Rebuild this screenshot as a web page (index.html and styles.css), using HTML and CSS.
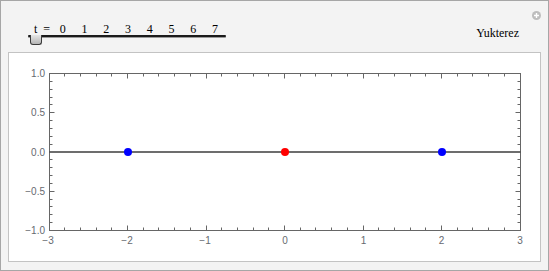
FILE: index.html
```html
<!DOCTYPE html>
<html>
<head>
<meta charset="utf-8">
<link rel="stylesheet" href="styles.css">
</head>
<body>
<div class="frame">
  <div class="controls">
    <div class="slider">
      <div class="labels">
        <span class="var">t&nbsp;&nbsp;=</span><span class="n">0</span><span class="n">1</span><span class="n">2</span><span class="n">3</span><span class="n">4</span><span class="n">5</span><span class="n">6</span><span class="n">7</span>
      </div>
      <div class="track"><div class="thumb"></div></div>
    </div>
    <div class="name">Yukterez</div>
  </div>
  <svg class="plus" width="9" height="9" viewBox="0 0 9 9"><circle cx="4.5" cy="4.5" r="4.5" fill="#bdbdbd"/><path d="M4.5 2v5M2 4.5h5" stroke="#fff" stroke-width="1.4"/></svg>
  <div class="panel">
    <svg class="plot" width="531" height="208" viewBox="9 53 531 208">
      <rect x="49.5" y="73.5" width="471" height="157" fill="none" stroke="#666" stroke-width="1"/>
      <path stroke="#666" stroke-width="1" fill="none" d="
M49.5 230.5v-5M64.5 230.5v-3M80.5 230.5v-3M96.5 230.5v-3M111.5 230.5v-3M127.5 230.5v-5M143.5 230.5v-3M158.5 230.5v-3M174.5 230.5v-3M190.5 230.5v-3M206.5 230.5v-5M221.5 230.5v-3M237.5 230.5v-3M253.5 230.5v-3M268.5 230.5v-3M284.5 230.5v-5M300.5 230.5v-3M315.5 230.5v-3M331.5 230.5v-3M347.5 230.5v-3M363.5 230.5v-5M378.5 230.5v-3M394.5 230.5v-3M410.5 230.5v-3M425.5 230.5v-3M441.5 230.5v-5M457.5 230.5v-3M472.5 230.5v-3M488.5 230.5v-3M504.5 230.5v-3M520.5 230.5v-5
M49.5 73.5v5M64.5 73.5v3M80.5 73.5v3M96.5 73.5v3M111.5 73.5v3M127.5 73.5v5M143.5 73.5v3M158.5 73.5v3M174.5 73.5v3M190.5 73.5v3M206.5 73.5v5M221.5 73.5v3M237.5 73.5v3M253.5 73.5v3M268.5 73.5v3M284.5 73.5v5M300.5 73.5v3M315.5 73.5v3M331.5 73.5v3M347.5 73.5v3M363.5 73.5v5M378.5 73.5v3M394.5 73.5v3M410.5 73.5v3M425.5 73.5v3M441.5 73.5v5M457.5 73.5v3M472.5 73.5v3M488.5 73.5v3M504.5 73.5v3M520.5 73.5v5
M49.5 81.5h3M49.5 89.5h3M49.5 97.5h3M49.5 104.5h3M49.5 112.5h5M49.5 120.5h3M49.5 128.5h3M49.5 136.5h3M49.5 144.5h3M49.5 159.5h3M49.5 167.5h3M49.5 175.5h3M49.5 183.5h3M49.5 191.5h5M49.5 199.5h3M49.5 206.5h3M49.5 214.5h3M49.5 222.5h3
M520.5 81.5h-3M520.5 89.5h-3M520.5 97.5h-3M520.5 104.5h-3M520.5 112.5h-5M520.5 120.5h-3M520.5 128.5h-3M520.5 136.5h-3M520.5 144.5h-3M520.5 159.5h-3M520.5 167.5h-3M520.5 175.5h-3M520.5 183.5h-3M520.5 191.5h-5M520.5 199.5h-3M520.5 206.5h-3M520.5 214.5h-3M520.5 222.5h-3"/>
      <line x1="49.5" y1="152" x2="520.5" y2="152" stroke="#3c3c3c" stroke-width="1.6"/>
      <g class="ylab" text-anchor="end">
        <text x="45" y="76.5">1.0</text>
        <text x="45" y="116">0.5</text>
        <text x="45" y="155.5">0.0</text>
        <text x="45" y="195">−0.5</text>
        <text x="45" y="234">−1.0</text>
      </g>
      <g class="xlab" text-anchor="middle">
        <text x="48" y="243.5">−3</text>
        <text x="127" y="243.5">−2</text>
        <text x="205" y="243.5">−1</text>
        <text x="285" y="243.5">0</text>
        <text x="363.5" y="243.5">1</text>
        <text x="441.5" y="243.5">2</text>
        <text x="520" y="243.5">3</text>
      </g>
      <circle cx="128" cy="152" r="4" fill="#0000ff"/>
      <circle cx="285" cy="152" r="4" fill="#ff0000"/>
      <circle cx="442" cy="152" r="4" fill="#0000ff"/>
    </svg>
  </div>
</div>
</body>
</html>
```
FILE: styles.css
```css
html, body {
  margin: 0;
  padding: 0;
  background: #ffffff;
}
.frame {
  position: relative;
  width: 549px;
  height: 271px;
  box-sizing: border-box;
  border: 1px solid #a6a6a6;
  background: #f3f3f3;
  padding: 0 8px 8px 7px;
}
.controls {
  height: 51px;
  display: flex;
  justify-content: space-between;
  align-items: flex-start;
  font-family: "Liberation Serif", "DejaVu Serif", serif;
  font-size: 12px;
  color: #000;
}
.slider {
  padding-top: 22px;
  padding-left: 20px;
  width: 198px;
}
.labels {
  display: flex;
  height: 13px;
  line-height: 13px;
}
.var {
  width: 24.4px;
  text-align: left;
  padding-left: 6px;
  box-sizing: border-box;
  white-space: nowrap;
}
.n {
  width: 22.3px;
  text-align: center;
}
.track {
  position: relative;
  margin-top: -1px;
  height: 2px;
  background: #1a1a1a;
  box-shadow: 0 1px 0 #9a9a9a;
  border-radius: 1px;
}
.thumb {
  position: absolute;
  left: 2px;
  top: 0;
  width: 12px;
  height: 10px;
  box-sizing: border-box;
  border: 1px solid #3a3a3a;
  border-top: none;
  border-radius: 0 0 3px 3px;
  background: linear-gradient(#e6e6e6, #b4b4b4);
}
.name {
  padding-top: 25px;
  padding-right: 21px;
  line-height: 14px;
}
.plus {
  position: absolute;
  top: 10px;
  right: 7px;
  display: block;
}
.panel {
  width: 533px;
  height: 210px;
  box-sizing: border-box;
  border: 1px solid #c3c3c3;
  background: #ffffff;
}
.plot {
  display: block;
}
.ylab text, .xlab text {
  font-family: "Liberation Sans", Arial, sans-serif;
  font-size: 10px;
  fill: #666a70;
}
```
